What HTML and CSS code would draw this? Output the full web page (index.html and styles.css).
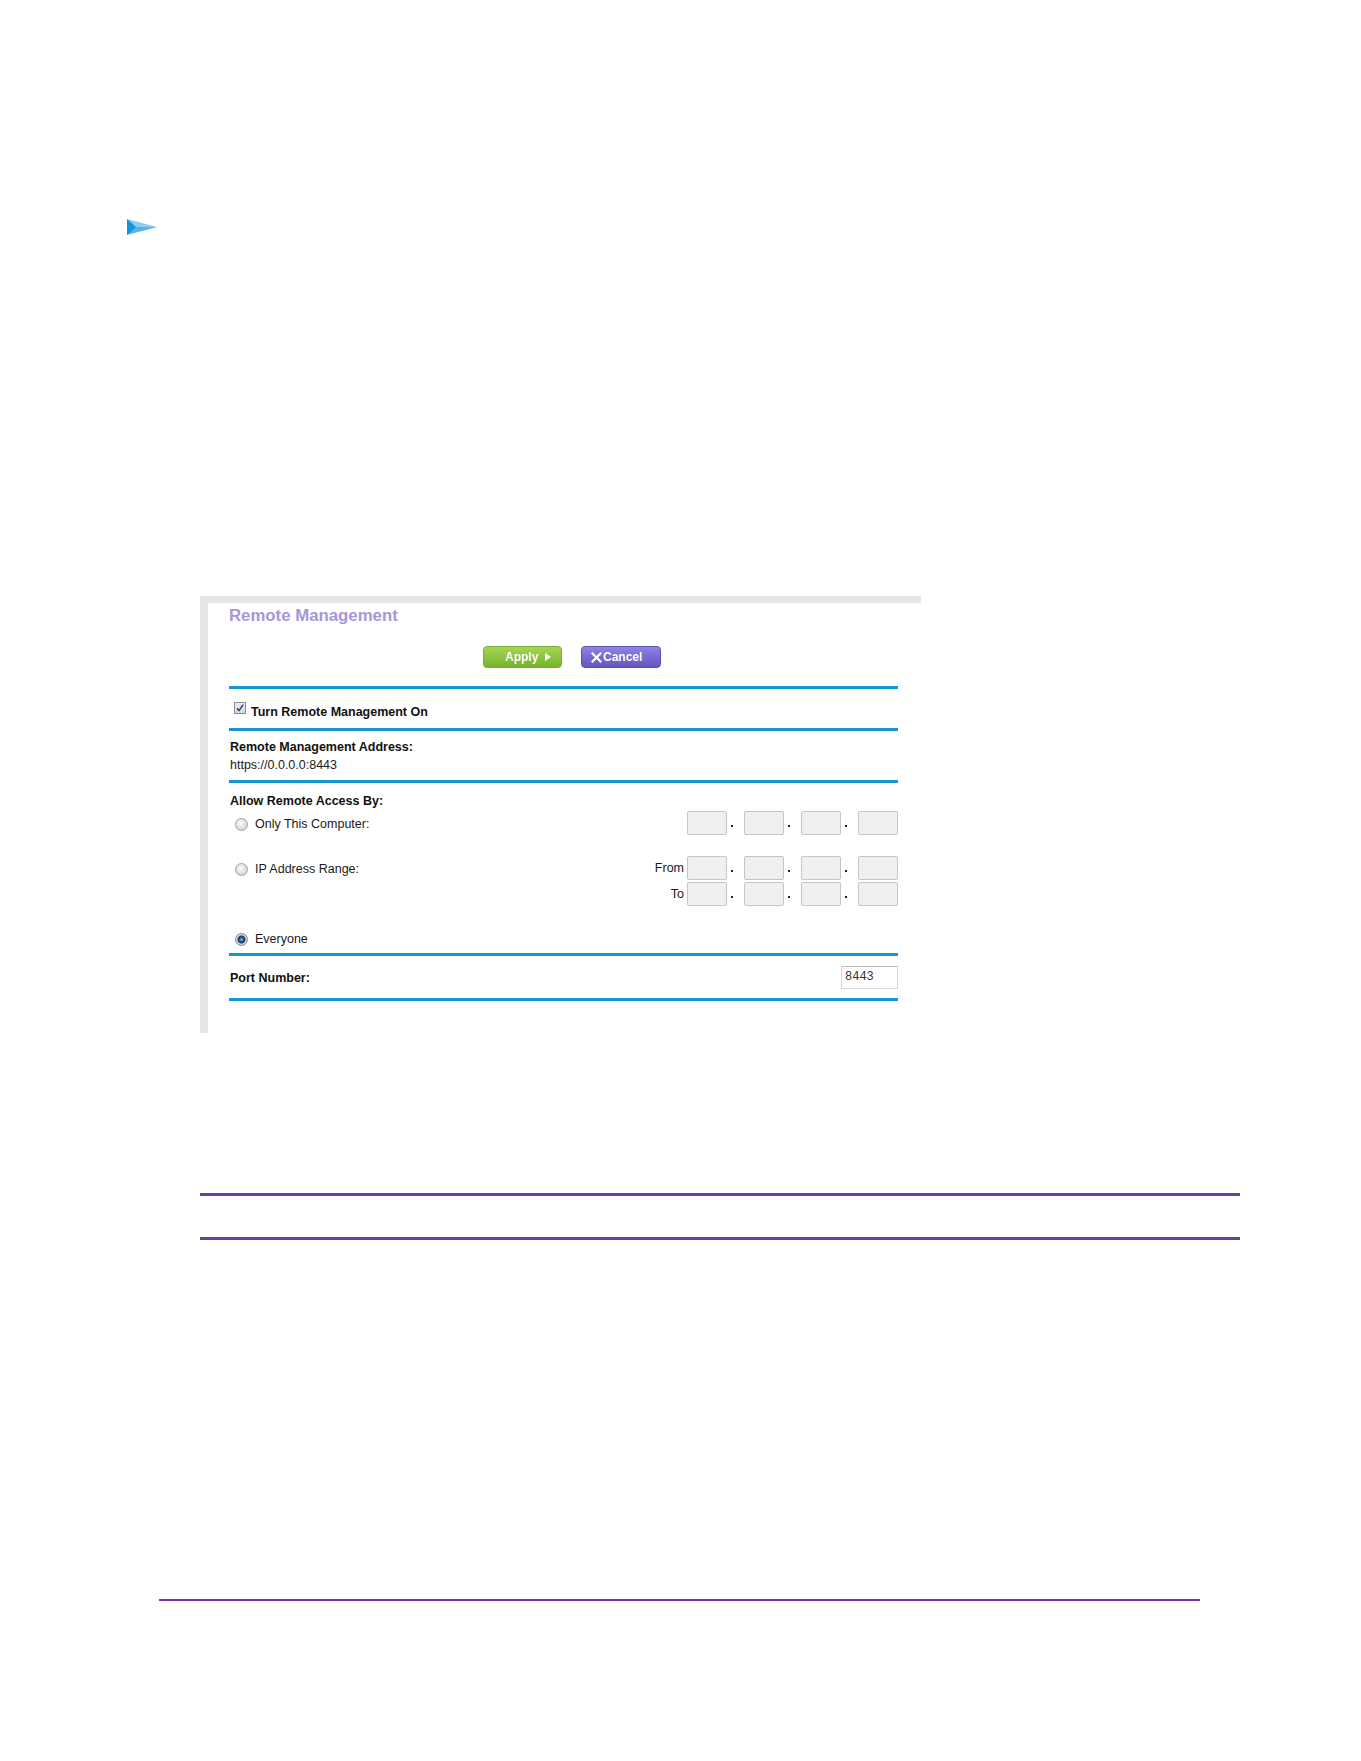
FILE: index.html
```html
<!DOCTYPE html>
<html lang="en">
<head>
<meta charset="utf-8">
<title>Remote Management</title>
<link rel="stylesheet" href="styles.css">
</head>
<body>
<div class="page">
  <svg class="marker" width="30" height="16" viewBox="0 0 30 16" aria-hidden="true">
    <polygon points="0,0 30,8 0,8" fill="#8fcdf0"/>
    <polygon points="0,8 30,8 0,16" fill="#56b3e8"/>
    <polygon points="0,0 9,8 0,16" fill="#1593dc"/>
  </svg>

  <div class="figure">
    <h2 class="panel-title">Remote Management</h2>
    <div class="actions">
      <button class="btn btn-apply" type="button">Apply<span class="play"></span></button>
      <button class="btn btn-cancel" type="button"><svg class="x" width="11" height="11" viewBox="0 0 11 11" aria-hidden="true"><path d="M1.5 1.5 L9.5 9.5 M9.5 1.5 L1.5 9.5" stroke="#fff" stroke-width="2.2" stroke-linecap="square"/></svg>Cancel</button>
    </div>

    <div class="section sec-toggle">
      <span class="checkbox"><svg width="10" height="10" viewBox="0 0 10 10" aria-hidden="true"><path d="M2 5.2 L4 7.6 L8.2 1.6" fill="none" stroke="#2b3a55" stroke-width="1.4"/></svg></span>
      <span class="label-bold toggle-text">Turn Remote Management On</span>
    </div>

    <div class="section sec-address">
      <div class="label-bold">Remote Management Address:</div>
      <div class="value">https://0.0.0.0:8443</div>
    </div>

    <div class="section sec-access">
      <div class="label-bold">Allow Remote Access By:</div>

      <div class="option-row row-only">
        <label class="opt"><span class="radio"></span>Only This Computer:</label>
        <div class="ip-row">
          <span class="ip-box"></span><span class="dot"></span>
          <span class="ip-box"></span><span class="dot"></span>
          <span class="ip-box"></span><span class="dot"></span>
          <span class="ip-box"></span>
        </div>
      </div>

      <div class="option-row row-range">
        <label class="opt"><span class="radio"></span>IP Address Range:</label>
        <div class="ip-group">
          <div class="ip-row">
            <span class="ip-prefix">From</span>
            <span class="ip-box"></span><span class="dot"></span>
            <span class="ip-box"></span><span class="dot"></span>
            <span class="ip-box"></span><span class="dot"></span>
            <span class="ip-box"></span>
          </div>
          <div class="ip-row">
            <span class="ip-prefix">To</span>
            <span class="ip-box"></span><span class="dot"></span>
            <span class="ip-box"></span><span class="dot"></span>
            <span class="ip-box"></span><span class="dot"></span>
            <span class="ip-box"></span>
          </div>
        </div>
      </div>

      <label class="opt opt-everyone"><span class="radio radio-on"></span>Everyone</label>
    </div>

    <div class="section sec-port">
      <span class="label-bold">Port Number:</span>
      <span class="port-input">8443</span>
    </div>
  </div>

  <div class="note-box"></div>

  <div class="footer-rule"></div>
</div>
</body>
</html>
```

FILE: styles.css
```css
html, body {
  margin: 0;
  padding: 0;
  background: #fff;
}

body {
  font-family: "Liberation Sans", Arial, sans-serif;
  color: #111;
}

.page {
  width: 1361px;
  padding-top: 219px;
  padding-bottom: 160px;
}

/* blue step marker */
.marker {
  display: block;
  margin-left: 127px;
}

/* router admin panel */
.figure {
  box-sizing: border-box;
  margin: 361px 0 0 200px;
  width: 721px;
  border-top: 7px solid #e6e6e6;
  border-left: 8px solid #e6e6e6;
  padding: 3px 23px 32px 21px;
}

.panel-title {
  margin: 0;
  font-size: 16.8px;
  line-height: 20px;
  font-weight: bold;
  color: #a697d8;
}

.actions {
  display: flex;
  gap: 19px;
  margin-top: 20px;
  padding-left: 254px;
}

.btn {
  box-sizing: border-box;
  height: 22px;
  border-radius: 4px;
  font-family: "Liberation Sans", Arial, sans-serif;
  font-size: 12px;
  font-weight: bold;
  color: #fff;
  display: flex;
  align-items: center;
  padding: 0;
  text-shadow: 0 0 1px rgba(0, 0, 0, 0.15);
}

.btn-apply {
  width: 79px;
  padding-left: 21px;
  border: 1px solid #76ad33;
  background: linear-gradient(#a6d457, #8ac43d 55%, #76b22a);
}

.play {
  width: 0;
  height: 0;
  margin-left: 7px;
  border-top: 4px solid transparent;
  border-bottom: 4px solid transparent;
  border-left: 6px solid #fff;
}

.btn-cancel {
  width: 80px;
  padding-left: 9px;
  border: 1px solid #5a50b2;
  background: linear-gradient(#8e84e2, #7569d2 55%, #6256bf);
}

.x {
  margin-right: 1px;
}

/* blue separated sections */
.section {
  border-top: 3px solid #1597d5;
}

.sec-toggle {
  margin-top: 18px;
  display: flex;
  align-items: flex-start;
  padding: 13px 0 0 5px;
  height: 42px;
  box-sizing: border-box;
}

.checkbox {
  box-sizing: border-box;
  width: 12px;
  height: 12px;
  border: 1px solid #8f8f8f;
  background: linear-gradient(#e8eef5, #cfd9e6);
  display: flex;
  align-items: center;
  justify-content: center;
}

.toggle-text {
  margin-left: 5px;
  margin-top: 1px;
  line-height: 15px;
}

.label-bold {
  font-size: 12.5px;
  font-weight: bold;
  line-height: 18px;
}

.value {
  font-size: 12.5px;
  line-height: 18px;
  color: #1a1a1a;
}

.sec-address {
  padding: 7px 0 6px 1px;
}

.sec-access {
  padding: 9px 0 5px 1px;
}

.option-row {
  display: flex;
  justify-content: space-between;
  align-items: flex-start;
}

.row-only {
  margin-top: 1px;
}

.row-range {
  margin-top: 21px;
}

.opt {
  display: flex;
  align-items: center;
  gap: 7px;
  padding-left: 5px;
  padding-top: 4px;
  font-size: 12.5px;
  line-height: 18px;
  color: #1a1a1a;
}

.opt-everyone {
  margin-top: 24px;
  padding-top: 0;
}

.radio {
  box-sizing: border-box;
  width: 13px;
  height: 13px;
  border-radius: 50%;
  border: 1px solid #a2a2a2;
  background: radial-gradient(circle at 45% 40%, #fbfbfb, #dcdcdc 60%, #c4c4c4);
}

.radio-on {
  background: radial-gradient(circle at 50% 50%, #8ec3ea 0, #1e5a8c 2px, #163f66 3.5px, #d6d6d6 4.5px, #c0c0c0 100%);
  border-color: #8a8a8a;
}

.ip-group {
  display: flex;
  flex-direction: column;
  gap: 2px;
}

.ip-row {
  display: flex;
  align-items: stretch;
}

.ip-prefix {
  width: 40px;
  text-align: right;
  font-size: 12.5px;
  line-height: 24px;
  color: #1a1a1a;
  margin-right: 3px;
}

.ip-box {
  box-sizing: border-box;
  width: 40px;
  height: 24px;
  background: #f0f0f0;
  border: 1px solid #c6c6c6;
  border-radius: 2px;
}

.dot {
  width: 17px;
  position: relative;
}

.dot::before {
  content: "";
  position: absolute;
  left: 4px;
  top: 14px;
  width: 2px;
  height: 2px;
  background: #222;
}

.sec-port {
  display: flex;
  align-items: center;
  justify-content: space-between;
  padding: 10px 0 9px 1px;
  border-bottom: 3px solid #1597d5;
}

.port-input {
  box-sizing: border-box;
  width: 57px;
  height: 23px;
  border: 1px solid #d6d6d6;
  border-top-color: #bdbdbd;
  padding-left: 3px;
  font-family: "Liberation Mono", "DejaVu Sans Mono", monospace;
  font-size: 12px;
  line-height: 21px;
  color: #333;
  background: #fff;
}

/* purple bordered note area */
.note-box {
  box-sizing: border-box;
  margin: 160px 0 0 200px;
  width: 1040px;
  height: 47px;
  border-top: 3px solid #6c3d9f;
  border-bottom: 3px solid #6c3d9f;
}

.footer-rule {
  margin: 359px 0 0 159px;
  width: 1041px;
  height: 2px;
  background: #7236a6;
}
```
